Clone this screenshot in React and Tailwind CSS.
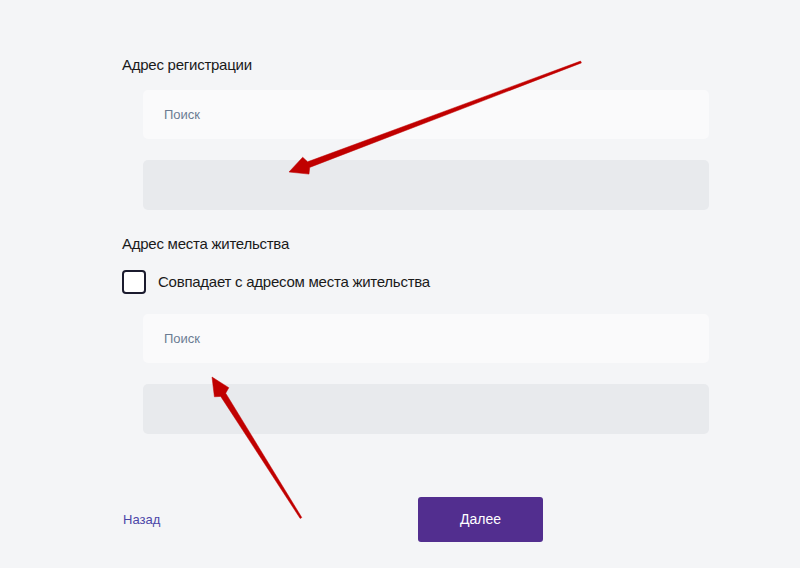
import React from "react";

function arrowPoints(tx, ty, hx, hy, tailW, shaftW, headLen, headW) {
  const dx = hx - tx;
  const dy = hy - ty;
  const len = Math.sqrt(dx * dx + dy * dy);
  const ux = dx / len;
  const uy = dy / len;
  const nx = -uy;
  const ny = ux;
  const bx = hx - ux * headLen;
  const by = hy - uy * headLen;
  const p = (x, y) => `${x.toFixed(1)},${y.toFixed(1)}`;
  return [
    p(tx + nx * tailW / 2, ty + ny * tailW / 2),
    p(bx + nx * shaftW / 2, by + ny * shaftW / 2),
    p(bx + nx * headW / 2 + ux * 3, by + ny * headW / 2 + uy * 3),
    p(hx, hy),
    p(bx - nx * headW / 2 + ux * 3, by - ny * headW / 2 + uy * 3),
    p(bx - nx * shaftW / 2, by - ny * shaftW / 2),
    p(tx - nx * tailW / 2, ty - ny * tailW / 2),
  ].join(" ");
}

function Arrows() {
  return (
    <svg
      className="absolute inset-0 pointer-events-none"
      width="800"
      height="568"
      viewBox="0 0 800 568"
    >
      <polygon
        points={arrowPoints(581, 62, 289, 172, 2, 6, 21, 18)}
        fill="#c00000"
        stroke="#c00000"
        strokeWidth="0.5"
        strokeLinejoin="round"
      />
      <polygon
        points={arrowPoints(301, 518, 212, 377, 2, 6, 21, 17)}
        fill="#c00000"
        stroke="#c00000"
        strokeWidth="0.5"
        strokeLinejoin="round"
      />
    </svg>
  );
}

function SearchInput() {
  return (
    <div className="h-[49px] rounded-[5px] bg-[#fafafb] flex items-center pl-[21px] text-[13px] text-[#6b7c93]">
      Поиск
    </div>
  );
}

function GrayBox() {
  return <div className="mt-[21px] h-[50px] rounded-[5px] bg-[#e8eaed]" />;
}

export default function App() {
  return (
    <div
      className="relative w-[800px] h-[568px] bg-[#f4f5f7] overflow-hidden"
      style={{ fontFamily: "'Liberation Sans', Arial, sans-serif" }}
    >
      <div className="pt-[55px] pl-[122px] w-[709px] flex flex-col">
        <div className="text-[15px] leading-[20px] tracking-[-0.25px] text-[#1a1a1a]">Адрес регистрации</div>
        <div className="mt-[15px] pl-[21px] flex flex-col">
          <SearchInput />
          <GrayBox />
        </div>
        <div className="mt-[24px] text-[15px] leading-[20px] tracking-[-0.25px] text-[#1a1a1a]">Адрес места жительства</div>
        <div className="mt-[16px] flex items-center gap-[12px]">
          <div className="w-[24px] h-[24px] rounded-[4px] border-[2.5px] border-[#1b1b2e] bg-white" />
          <span className="text-[15px] tracking-[-0.25px] text-[#1a1a1a]">Совпадает с адресом места жительства</span>
        </div>
        <div className="mt-[20px] pl-[21px] flex flex-col">
          <SearchInput />
          <GrayBox />
        </div>
        <div className="mt-[63px] flex items-center">
          <span className="w-[296px] pl-[1px] text-[13px] text-[#4b46a8]">Назад</span>
          <button className="w-[125px] h-[45px] rounded-[3px] bg-[#522e8f] text-white text-[14px]">
            Далее
          </button>
        </div>
      </div>
      <Arrows />
    </div>
  );
}
